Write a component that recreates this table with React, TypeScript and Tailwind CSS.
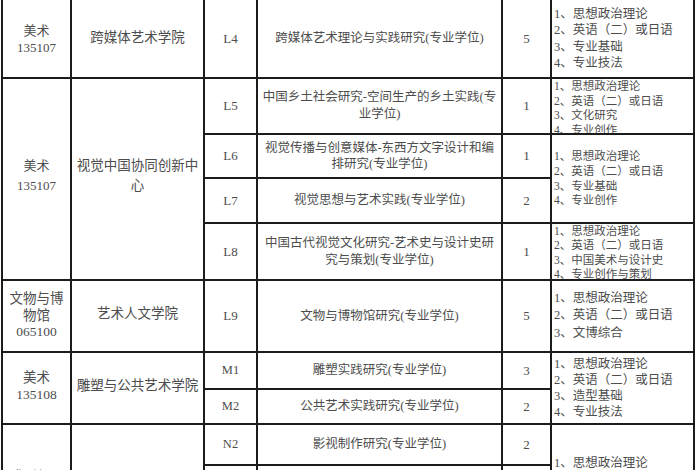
const font = { fontFamily: '"Liberation Serif", "Noto Sans CJK SC", serif' }

function Exam({ lines, className }: { lines: string[]; className: string }) {
  return (
    <div className={`bg-white overflow-hidden pl-[2px] text-[#4d4d4d] ${className}`}>
      <div>
        {lines.map((l) => (
          <div key={l} className="whitespace-nowrap">
            {l}
          </div>
        ))}
      </div>
    </div>
  )
}

const base = ['1、思想政治理论', '2、英语（二）或日语']

export default function App() {
  const center = 'bg-white flex items-center justify-center text-center text-[#4d4d4d]'
  return (
    <div className="min-h-screen bg-white overflow-hidden" style={font}>
      <div className="ml-[1px] w-[694px] grid grid-cols-[67px_131px_51px_243px_47px_141px] grid-rows-[77px_54px_42px_43px_55px_70px_35px_33px_39px_60px] gap-[2px] px-[2px] pb-[2px] bg-[#1c1c1c]">
        {/* 跨媒体 */}
        <div className={`${center} col-start-1 row-start-1 text-[13px] leading-[17px]`}>
          美术<br />135107
        </div>
        <div className={`${center} col-start-2 row-start-1 text-[13.5px]`}>跨媒体艺术学院</div>
        <div className={`${center} col-start-3 row-start-1 text-[13px]`}>L4</div>
        <div className={`${center} col-start-4 row-start-1 text-[12.5px]`}>跨媒体艺术理论与实践研究(专业学位)</div>
        <div className={`${center} col-start-5 row-start-1 text-[13px]`}>5</div>
        <Exam
          className="col-start-6 row-start-1 flex items-center text-[12.5px] leading-[16.3px]"
          lines={[...base, '3、专业基础', '4、专业技法']}
        />

        {/* 视觉中国 */}
        <div className={`${center} col-start-1 row-start-2 row-span-4 text-[13px] leading-[20px] pb-[6px]`}>
          美术<br />135107
        </div>
        <div className={`${center} col-start-2 row-start-2 row-span-4 text-[13.5px] leading-[20px] pb-[6px]`}>
          视觉中国协同创新中<br />心
        </div>
        <div className={`${center} col-start-3 row-start-2 text-[13px]`}>L5</div>
        <div className={`${center} col-start-4 row-start-2 text-[12.5px] leading-[17px]`}>
          中国乡土社会研究-空间生产的乡土实践(专<br />业学位)
        </div>
        <div className={`${center} col-start-5 row-start-2 text-[13px]`}>1</div>
        <Exam
          className="col-start-6 row-start-2 text-[11.5px] leading-[14.5px]"
          lines={[...base, '3、文化研究', '4、专业创作']}
        />

        <div className={`${center} col-start-3 row-start-3 text-[13px]`}>L6</div>
        <div className={`${center} col-start-4 row-start-3 text-[12.5px] leading-[16px]`}>
          视觉传播与创意媒体-东西方文字设计和编<br />排研究(专业学位)
        </div>
        <div className={`${center} col-start-5 row-start-3 text-[13px]`}>1</div>
        <div className={`${center} col-start-3 row-start-4 text-[13px]`}>L7</div>
        <div className={`${center} col-start-4 row-start-4 text-[12.5px]`}>视觉思想与艺术实践(专业学位)</div>
        <div className={`${center} col-start-5 row-start-4 text-[13px]`}>2</div>
        <Exam
          className="col-start-6 row-start-3 row-span-2 flex items-center text-[11.5px] leading-[14.7px]"
          lines={[...base, '3、专业基础', '4、专业创作']}
        />

        <div className={`${center} col-start-3 row-start-5 text-[13px]`}>L8</div>
        <div className={`${center} col-start-4 row-start-5 text-[12.5px] leading-[17px]`}>
          中国古代视觉文化研究-艺术史与设计史研<br />究与策划(专业学位)
        </div>
        <div className={`${center} col-start-5 row-start-5 text-[13px]`}>1</div>
        <Exam
          className="col-start-6 row-start-5 text-[11.5px] leading-[14.3px]"
          lines={[...base, '3、中国美术与设计史', '4、专业创作与策划']}
        />

        {/* 文博 */}
        <div className={`${center} col-start-1 row-start-6 text-[13.5px] leading-[16.5px]`}>
          文物与博<br />物馆<br />065100
        </div>
        <div className={`${center} col-start-2 row-start-6 text-[13.5px] pb-[4px]`}>艺术人文学院</div>
        <div className={`${center} col-start-3 row-start-6 text-[13px]`}>L9</div>
        <div className={`${center} col-start-4 row-start-6 text-[12.5px]`}>文物与博物馆研究(专业学位)</div>
        <div className={`${center} col-start-5 row-start-6 text-[13px]`}>5</div>
        <Exam
          className="col-start-6 row-start-6 flex items-center text-[12.5px] leading-[17.5px]"
          lines={[...base, '3、文博综合']}
        />

        {/* 雕塑 */}
        <div className={`${center} col-start-1 row-start-7 row-span-2 text-[13.5px] leading-[17px] pb-[4px]`}>
          美术<br />135108
        </div>
        <div className={`${center} col-start-2 row-start-7 row-span-2 text-[13.5px] pb-[4px]`}>雕塑与公共艺术学院</div>
        <div className={`${center} col-start-3 row-start-7 text-[12.5px]`}>M1</div>
        <div className={`${center} col-start-4 row-start-7 text-[12.5px]`}>雕塑实践研究(专业学位)</div>
        <div className={`${center} col-start-5 row-start-7 text-[13px]`}>3</div>
        <div className={`${center} col-start-3 row-start-8 text-[12.5px]`}>M2</div>
        <div className={`${center} col-start-4 row-start-8 text-[12.5px]`}>公共艺术实践研究(专业学位)</div>
        <div className={`${center} col-start-5 row-start-8 text-[13px]`}>2</div>
        <Exam
          className="col-start-6 row-start-7 row-span-2 flex items-center text-[12.5px] leading-[16px]"
          lines={[...base, '3、造型基础', '4、专业技法']}
        />

        {/* 影视 */}
        <div className="bg-white col-start-1 row-start-9 row-span-2 pt-[42px] text-center text-[13.5px] text-[#4d4d4d]">
          戏剧与影视
        </div>
        <div className="bg-white col-start-2 row-start-9 row-span-2" />
        <div className={`${center} col-start-3 row-start-9 text-[12.5px]`}>N2</div>
        <div className={`${center} col-start-4 row-start-9 text-[12.5px]`}>影视制作研究(专业学位)</div>
        <div className={`${center} col-start-5 row-start-9 text-[13px]`}>2</div>
        <Exam
          className="col-start-6 row-start-9 row-span-2 pt-[30px] text-[12.5px] leading-[16px]"
          lines={[...base, '3、专业基础', '4、专业创作']}
        />
        <div className="bg-white col-start-3 row-start-10" />
        <div className="bg-white col-start-4 row-start-10" />
        <div className="bg-white col-start-5 row-start-10" />
      </div>
    </div>
  )
}
